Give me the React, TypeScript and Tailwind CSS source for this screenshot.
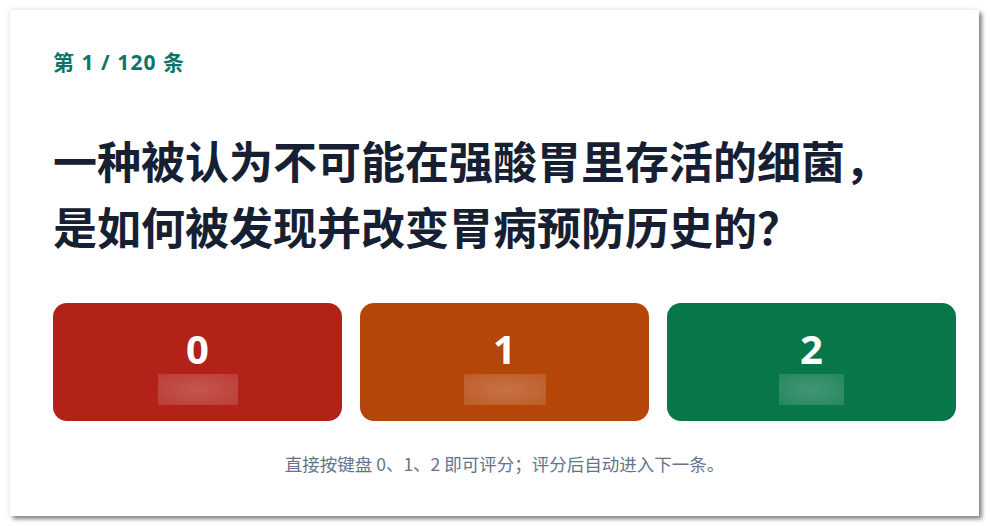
import React from "react";

const buttons = [
  { n: "0", bg: "bg-[#b22219]", w: "w-[80px]" },
  { n: "1", bg: "bg-[#b4460a]", w: "w-[82px]" },
  { n: "2", bg: "bg-[#077649]", w: "w-[65px]" },
];

export default function App() {
  return (
    <div className="w-[990px] h-[526px] bg-white pt-[10px] pl-[10px] font-['Open_Sans','Noto_Sans_CJK_SC',sans-serif]">
      <div className="w-[969px] h-[506px] bg-white shadow-[3px_3px_4px_rgba(0,0,0,0.45),0_0_6px_rgba(0,0,0,0.12)] pl-[43px] pr-[23px] pt-[38px]">
        <div className="text-[21px] leading-[28px] font-bold tracking-[0.05em] text-[#0f7468]">
          第 1 / 120 条
        </div>
        <h1 className="mt-[51px] text-[44px] leading-[66px] font-bold text-[#172033] font-['Noto_Sans_CJK_SC',sans-serif]">
          一种被认为不可能在强酸胃里存活的细菌，
          <br />
          是如何被发现并改变胃病预防历史的？
        </h1>
        <div className="mt-[44px] grid grid-cols-3 gap-[18px]">
          {buttons.map((b) => (
            <div
              key={b.n}
              className={`${b.bg} h-[118px] rounded-[14px] flex flex-col items-center pt-[24px]`}
            >
              <div className="text-white text-[40px] leading-[44px] font-bold">{b.n}</div>
              <div
                className={`${b.w} h-[31px] mt-[3px] bg-[radial-gradient(ellipse_at_center,rgba(255,255,255,0.24),rgba(255,255,255,0.12))]`}
              />
            </div>
          ))}
        </div>
        <div className="mt-[31px] text-center text-[17.5px] leading-[24px] text-[#64748b] font-['Noto_Sans_CJK_SC',sans-serif]">
          直接按键盘 0、1、2 即可评分；评分后自动进入下一条。
        </div>
      </div>
    </div>
  );
}
